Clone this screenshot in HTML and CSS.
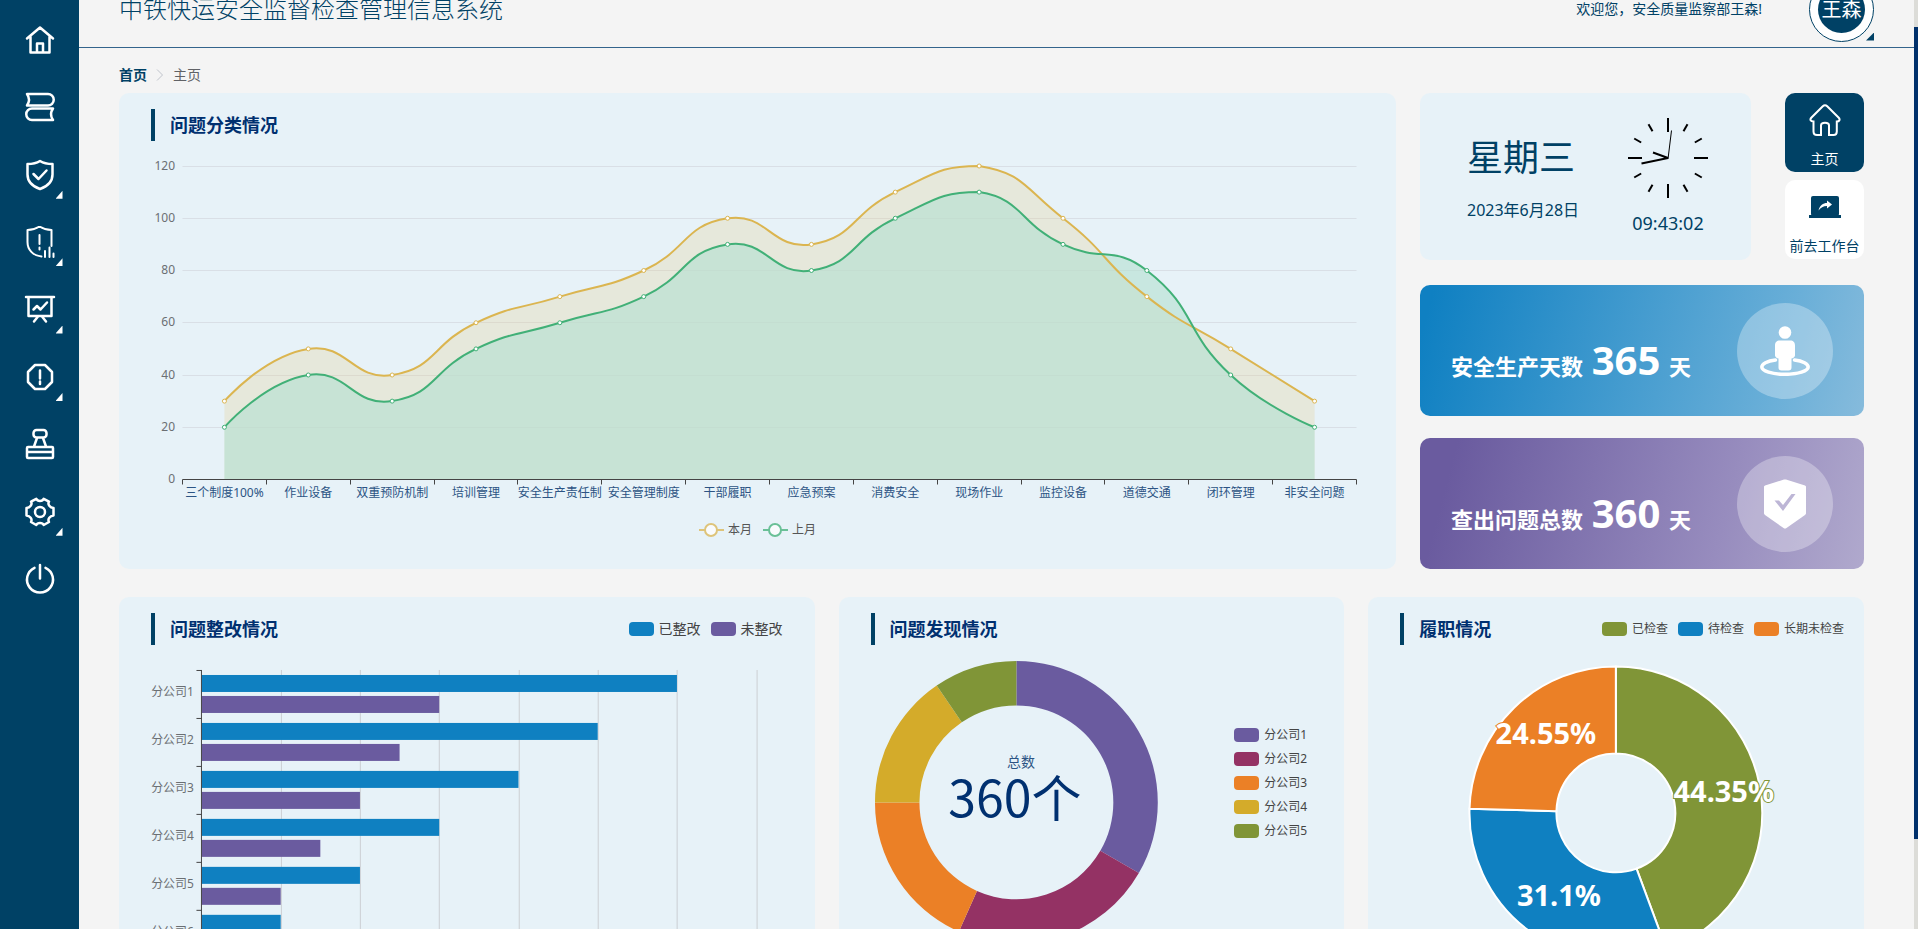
FILE: index.html
```html
<!DOCTYPE html>
<html lang="zh-CN">
<head>
<meta charset="utf-8">
<title>中铁快运安全监督检查管理信息系统</title>
<link rel="stylesheet" href="styles.css">
</head>
<body>
<div class="app">
  <aside class="sidebar">
    <nav class="side-nav">
      <a class="side-item" href="#" aria-label="home"><svg viewBox="0 0 32 32"><path d="M3 14.500 16 3.500 29 14.500M6.500 12.500V28.500H25.500V12.500M13 28V19.500H19V28"/></svg></a>
      <a class="side-item" href="#" aria-label="books"><svg viewBox="0 0 32 32"><path d="M3 3H24a5 5 0 0 1 0 11.500H3C5.800 10.500 5.800 7 3 3ZM29 17.500H8a5 5 0 0 0 0 11.500H29C26.200 25 26.200 21.500 29 17.500Z"/></svg></a>
      <a class="side-item has-sub" href="#" aria-label="shield"><svg viewBox="0 0 32 32"><path d="M16 2C12 4.500 8 5 3.500 5V15.500C3.500 22.500 9 27.500 16 30 23 27.500 28.500 22.500 28.500 15.500V5C24 5 20 4.500 16 2ZM9.500 15l5 5 8-8.500"/></svg></a>
      <a class="side-item has-sub" href="#" aria-label="risk"><svg class="thin" viewBox="0 0 32 32"><path d="M27.500 20V4C22.500 4 18.500 2.500 15.500 0.500 12.500 2.500 8.500 4 3.500 4V16C3.500 24 9 29.500 17.500 30.500M15.500 9V18M15.500 21.500V23.500M21 25V31M25.500 21.500V31M29.500 27.500V31"/></svg></a>
      <a class="side-item has-sub" href="#" aria-label="report"><svg viewBox="0 0 32 32"><path d="M2 3H30M4.500 3V22H27.500V3M9.500 15.500 13 12 16.500 15.500 23 8.500M14 22.500 10 27.500M18 22.500 22 27.500"/></svg></a>
      <a class="side-item has-sub" href="#" aria-label="warning"><svg viewBox="0 0 32 32"><path d="M11 4H21L28 11V21L21 28H11L4 21V11ZM16 9.500V17.500M16 20.500V23"/></svg></a>
      <a class="side-item" href="#" aria-label="stamp"><svg viewBox="0 0 32 32"><path d="M12.500 2H19.500A3 3 0 0 1 22.500 5V6.500A3 3 0 0 1 19.500 9.500H12.500A3 3 0 0 1 9.500 6.500V5A3 3 0 0 1 12.500 2ZM13 10 10 18.500M19 10 22 18.500M4 19H28A1 1 0 0 1 29 20V29A1 1 0 0 1 28 30H4A1 1 0 0 1 3 29V20A1 1 0 0 1 4 19ZM3 24H29"/></svg></a>
      <a class="side-item has-sub" href="#" aria-label="settings"><svg viewBox="0 0 32 32"><circle cx="16" cy="16" r="5"/><path d="M12.300 2.800C13.500 5.600 18.500 5.600 19.700 2.800L25 5.700C23.300 8.500 26 11.800 29.500 12V19.500C26 20 23.300 23 25 26L19.700 29C18.500 26.400 13.500 26.400 12.300 29L7 26C8.700 23 6 20 2.500 19.500V12C6 11.800 8.700 8.500 7 5.700Z"/></svg></a>
      <a class="side-item" href="#" aria-label="logout"><svg viewBox="0 0 32 32"><path d="M16 2V15.500M10.500 4.800A13 13 0 1 0 21.500 4.800"/></svg></a>
    </nav>
  </aside>

  <main class="main">
    <header class="topbar">
      <h1 class="system-name">中铁快运安全监督检查管理信息系统</h1>
      <span class="welcome">欢迎您，安全质量监察部王森!</span>
      <button class="avatar" type="button"><span class="avatar-name">王森</span></button>
    </header>

    <div class="content">
      <nav class="breadcrumb">
        <a class="crumb-home" href="#">首页</a>
        <svg class="crumb-arrow" viewBox="0 0 8 14"><path d="M1 1.500 6.500 7 1 12.500"/></svg>
        <span>主页</span>
      </nav>

      <section class="row row-top">
        <article class="panel">
          <div class="panel-head"><h2>问题分类情况</h2></div>
          <svg class="chart" id="line-chart" viewBox="0 0 1277 428"></svg>
        </article>

        <div class="side-column">
          <div class="top-cards">
            <div class="clock-card">
              <div class="date-block">
                <strong class="weekday">星期三</strong>
                <span class="date">2023年6月28日</span>
              </div>
              <div class="clock-block">
                <svg class="clock" viewBox="-40 -40 80 80">
                  <g id="clock-ticks"></g>
                  <path class="hand" d="M0 0-15-5.500M0 0-26.500 5.500"/>
                  <path class="hand second" d="M0 1 3.500-27.500"/>
                </svg>
                <time class="time">09:43:02</time>
              </div>
            </div>
            <div class="tiles">
              <button class="tile active" type="button">
                <svg viewBox="0 0 32 32"><path class="outline" d="M16 1.200C17 1.200 17.600 1.700 18.200 2.300L29.500 13.500C31.500 15.500 30.500 17.500 27.800 17.500V27.500C27.800 30 26.500 31 24.500 31H20V21.500C20 19.500 19 18.800 16 18.800S12 19.500 12 21.500V31H8C5.500 31 4.500 30 4.500 27.500V17.500C1.500 17.500 .5 15.500 2.500 13.500L13.800 2.300C14.400 1.700 15 1.200 16 1.200Z"/></svg>
                <span>主页</span>
              </button>
              <button class="tile" type="button">
                <svg viewBox="0 0 32 32"><rect class="solid" x="2" y="5" width="28" height="20" rx="2"/><path class="solid" d="M0 24H32V27H0Z"/><path class="cut" d="M9.500 19.500C11 14 14 12 18 12V9.500L23 13.500 18 17.500V15C14 15 12 16.500 9.500 19.500Z"/></svg>
                <span>前去工作台</span>
              </button>
            </div>
          </div>

          <div class="stat stat-blue">
            <p class="stat-text">安全生产天数 <b>365</b> 天</p>
            <span class="stat-icon"><svg viewBox="0 0 50 50"><circle cx="25" cy="6.500" r="6.300"/><path d="M20 14.500H30C33.500 14.500 35 16.500 35 19.500V29.500C35 31 33 32.500 31.500 32.500V41.500C31.500 43.500 30.500 44.500 28.500 44.500H21.500C19.500 44.500 18.500 43.500 18.500 41.500V32.500C17 32.500 15 31 15 29.500V19.500C15 16.500 16.500 14.500 20 14.500Z"/><path class="ring" d="M15.500 34C7 35 1.800 38 1.800 41 1.800 45 12 48.300 25 48.300S48.200 45 48.200 41C48.200 38 43 35 34.500 34"/></svg></span>
          </div>
          <div class="stat stat-purple">
            <p class="stat-text">查出问题总数 <b>360</b> 天</p>
            <span class="stat-icon"><svg viewBox="0 0 50 50"><path d="M24 .5H26L45 6.500C46 7 46 7.500 46 8V34C46 35 45.500 35.500 45 36L26.500 49C25.500 49.700 24.500 49.700 23.500 49L5 36C4.500 35.500 4 35 4 34V8C4 7.500 4 7 5 6.500Z"/><path class="check" d="M14.500 21.500H19L23 26 31.500 15H35.500L23 32Z"/></svg></span>
          </div>
        </div>
      </section>

      <section class="row row-bottom">
        <article class="panel">
          <div class="panel-head">
            <h2>问题整改情况</h2>
            <ul class="legend">
              <li><i class="swatch blue"></i>已整改</li>
              <li><i class="swatch purple"></i>未整改</li>
            </ul>
          </div>
          <svg class="chart" id="bar-chart" viewBox="0 0 696 370"></svg>
        </article>

        <article class="panel">
          <div class="panel-head"><h2>问题发现情况</h2></div>
          <div class="donut-body">
            <svg class="chart" id="donut-chart" viewBox="0 0 380 370"></svg>
            <ul class="legend legend-small legend-list">
              <li><i class="swatch purple"></i>分公司1</li>
              <li><i class="swatch wine"></i>分公司2</li>
              <li><i class="swatch orange"></i>分公司3</li>
              <li><i class="swatch yellow"></i>分公司4</li>
              <li><i class="swatch green"></i>分公司5</li>
            </ul>
          </div>
        </article>

        <article class="panel">
          <div class="panel-head head-wide">
            <h2>履职情况</h2>
            <ul class="legend legend-small">
              <li><i class="swatch green"></i>已检查</li>
              <li><i class="swatch blue"></i>待检查</li>
              <li><i class="swatch orange"></i>长期未检查</li>
            </ul>
          </div>
          <svg class="chart" id="pie-chart" viewBox="0 0 496 370"></svg>
        </article>
      </section>
    </div>
  </main>

  <div class="scroll-track"><div class="scroll-thumb"></div></div>
</div>
<script src="charts.js"></script>
</body>
</html>
```

FILE: styles.css
```css
:root {
  --navy: #004165;
  --ink: #003070;
  --panel: #e7f2f8;
  --blue: #0f80c1;
  --purple: #6a5b9f;
  --wine: #943264;
  --orange: #eb8026;
  --yellow: #d4ab2a;
  --green: #809537;
}

* {
  box-sizing: border-box;
}

body {
  margin: 0;
  background: #f4f4f4;
  color: var(--navy);
  font: 14px/20px "Noto Sans", "Noto Sans CJK SC", sans-serif;
}

h1, h2, p, ul {
  margin: 0;
  padding: 0;
}

button {
  border: 0;
  padding: 0;
  font: inherit;
  cursor: pointer;
}

a {
  color: inherit;
  text-decoration: none;
}

.app {
  display: grid;
  grid-template-columns: 79px minmax(0, 1fr) 4px;
  height: 100vh;
  overflow: hidden;
}

/* Sidebar */
.sidebar {
  background: var(--navy);
  padding-top: 24px;
}

.side-nav {
  display: flex;
  flex-direction: column;
  align-items: center;
  justify-content: space-between;
  height: 571px;
}

.side-item {
  position: relative;
  width: 32px;
  height: 32px;
}

.side-item svg {
  display: block;
  fill: none;
  stroke: #fff;
  stroke-width: 2.5;
  stroke-linejoin: round;
  stroke-linecap: round;
}

.side-item .thin {
  stroke-width: 2;
}

.has-sub::after,
.avatar::after {
  content: "";
  position: absolute;
  left: 32px;
  top: 32px;
  width: 7px;
  height: 8px;
  background: #fff;
  clip-path: polygon(100% 0, 100% 100%, 0 100%);
}

/* The page is shown slightly scrolled, so the top bar starts above the view. */
.main {
  overflow: hidden;
}

.topbar {
  display: flex;
  align-items: center;
  height: 77px;
  margin-top: -29px;
  padding: 0 40px;
  border-bottom: 1px solid #33648c;
}

.system-name {
  font-size: 24px;
  line-height: 32px;
  font-weight: 300;
}

.welcome {
  margin-left: auto;
}

.avatar {
  position: relative;
  display: grid;
  place-items: center;
  width: 65px;
  height: 65px;
  margin-left: 47px;
  border: 1px solid var(--navy);
  border-radius: 50%;
  background: #fff;
}

.avatar::after {
  left: 56px;
  top: 55px;
  width: 8px;
  background: var(--navy);
}

.avatar-name {
  width: 47px;
  height: 47px;
  border-radius: 50%;
  background: var(--navy);
  color: #fff;
  font-size: 20px;
  line-height: 47px;
  white-space: nowrap;
}

.content {
  padding: 17px 50px 24px 40px;
}

.breadcrumb {
  display: flex;
  align-items: center;
  gap: 9px;
  height: 20px;
  margin-bottom: 8px;
  color: #606266;
}

.crumb-home {
  color: var(--navy);
  font-weight: 700;
}

.crumb-arrow {
  width: 8px;
  height: 14px;
  fill: none;
  stroke: #c0c4cc;
}

/* Rows and panels */
.row {
  display: grid;
  gap: 24px;
}

.row-top {
  grid-template-columns: 1277fr 444fr;
  margin-bottom: 28px;
}

.row-bottom {
  grid-template-columns: 696fr 506fr 496fr;
}

.panel {
  min-width: 0;
  padding-top: 16px;
  border-radius: 10px;
  background: var(--panel);
}

.panel-head {
  display: flex;
  align-items: center;
  justify-content: space-between;
  height: 32px;
  margin: 0 32px;
}

.head-wide {
  margin-right: 20px;
}

.panel-head h2 {
  padding-left: 15px;
  border-left: 4px solid var(--navy);
  color: var(--ink);
  font-size: 18px;
  line-height: 32px;
  white-space: nowrap;
}

.chart {
  display: block;
  width: 100%;
}

.legend {
  display: flex;
  gap: 10px;
  color: #444;
  font-size: 14px;
  line-height: 14px;
  list-style: none;
}

.legend li {
  display: flex;
  align-items: center;
  gap: 5px;
  white-space: nowrap;
}

.legend-small {
  font-size: 12px;
}

.swatch {
  width: 25px;
  height: 14px;
  border-radius: 4px;
}

.swatch.blue { background: var(--blue); }
.swatch.purple { background: var(--purple); }
.swatch.wine { background: var(--wine); }
.swatch.orange { background: var(--orange); }
.swatch.yellow { background: var(--yellow); }
.swatch.green { background: var(--green); }

.donut-body {
  display: grid;
  grid-template-columns: 380fr 126fr;
}

.legend-list {
  flex-direction: column;
  padding: 83px 0 0 16px;
}

/* Right column */
.side-column {
  display: flex;
  flex-direction: column;
  gap: 22px;
}

.top-cards {
  display: flex;
  gap: 34px;
  margin-bottom: 3px;
}

.clock-card {
  flex: 1;
  display: flex;
  justify-content: space-between;
  padding: 25px 43px 0 47px;
  height: 167px;
  border-radius: 10px;
  background: var(--panel);
}

.date-block,
.clock-block {
  display: flex;
  flex-direction: column;
}

.date-block {
  padding-top: 16px;
  gap: 18px;
}

.weekday {
  font-size: 36px;
  line-height: 48px;
  font-weight: 400;
}

.date {
  font-size: 16px;
  white-space: nowrap;
}

.clock-block {
  align-items: center;
  gap: 15px;
}

.clock {
  width: 80px;
  height: 80px;
}

.clock line {
  stroke: #000;
  stroke-width: 2;
}

.hand {
  fill: none;
  stroke: #000;
  stroke-width: 2;
}

.second {
  stroke-width: 1;
}

.time {
  font-size: 18px;
}

.tiles {
  display: flex;
  flex-direction: column;
  gap: 8px;
  width: 79px;
}

.tile {
  display: flex;
  flex-direction: column;
  align-items: center;
  gap: 13px;
  height: 79px;
  padding-top: 11px;
  border-radius: 10px;
  background: #fff;
  color: var(--navy);
  white-space: nowrap;
}

.tile.active {
  background: var(--navy);
  color: #fff;
}

.tile svg {
  flex: none;
  width: 32px;
  height: 32px;
}

.outline {
  fill: none;
  stroke: currentColor;
  stroke-width: 2;
}

.solid {
  fill: currentColor;
}

.cut {
  fill: #fff;
}

.stat {
  display: flex;
  align-items: center;
  justify-content: space-between;
  height: 131px;
  padding: 0 31px;
  border-radius: 10px;
  color: #fff;
}

.stat-blue {
  background: linear-gradient(105deg, #0f80c2 3%, #6aafd8 80%, #86bbdc);
}

.stat-purple {
  background: linear-gradient(105deg, #6a5b9f 8%, #978cbe 68%, #b0a9cd);
}

.stat-text {
  padding-top: 25px;
  font-size: 22px;
  line-height: 48px;
  font-weight: 700;
  white-space: nowrap;
}

.stat-text b {
  margin: 0 3px;
  font-size: 40px;
  font-weight: 700;
}

.stat-icon {
  display: grid;
  place-items: center;
  width: 96px;
  height: 96px;
  border-radius: 50%;
  background: rgba(255, 255, 255, .3);
}

.stat-icon svg {
  width: 50px;
  height: 50px;
  fill: #fff;
}

.stat-icon .ring {
  fill: none;
  stroke: #fff;
  stroke-width: 3.5;
  stroke-linecap: round;
}

.stat-icon .check {
  fill: #bdb6d6;
}

/* Charts */
.axis-label { font-size: 12px; fill: #6b6f73; }
.category-label { font-size: 12px; fill: #2c5484; text-anchor: middle; }
.end { text-anchor: end; }
.grid-line { stroke: #d9dfe6; }
.bar-grid { stroke: #cccfd3; }
.axis { stroke: #444; fill: none; }
.legend-text { font-size: 12px; fill: #555; }
.line-a, .line-b { fill: none; stroke-width: 2; }
.line-a { stroke: #dbb550; }
.line-b { stroke: #41b077; }
.area-a { fill: rgba(227, 209, 151, .3); }
.area-b { fill: rgba(183, 224, 211, .65); }
.dot.line-a, .dot.line-b { fill: #fff; stroke-width: 1; }
.legend-key { opacity: .75; }
.legend-dot.line-a, .legend-dot.line-b { fill: #fff; }
.donut-caption { font-size: 14px; fill: #2c5484; text-anchor: middle; }
.donut-total { font: 50px "Noto Sans CJK SC", sans-serif; fill: var(--ink); text-anchor: middle; }
.pie-label {
  font-size: 29px;
  font-weight: 700;
  fill: #fff;
  stroke-width: 2;
  paint-order: stroke;
  text-anchor: middle;
}
.pie-slice { stroke: #fff; stroke-width: 2; }

/* Page scroll position */
.scroll-track {
  padding-top: 27px;
  background: #dcdcd8;
}

.scroll-thumb {
  height: 90%;
  background: #00306b;
}
```

FILE: charts.js
```js
const NS = "http://www.w3.org/2000/svg";

function add(parent, tag, attrs, text) {
  const el = document.createElementNS(NS, tag);
  for (const key in attrs) el.setAttribute(key, attrs[key]);
  if (text !== undefined) el.textContent = text;
  parent.appendChild(el);
  return el;
}

/* Smooth path through the points; control points stay inside the series' own height range. */
function smoothPath(points) {
  const ys = points.map(p => p[1]);
  const top = Math.min(...ys), bottom = Math.max(...ys);
  const clamp = y => Math.max(top, Math.min(bottom, y));
  let d = "M" + points[0].join(" ");
  let out = points[0];
  for (let i = 1; i < points.length; i++) {
    const p = points[i], prev = points[i - 1], next = points[i + 1];
    let into = p, nextOut = p;
    if (next) {
      const vx = (next[0] - prev[0]) / 2, vy = (next[1] - prev[1]) / 2;
      const before = Math.hypot(p[0] - prev[0], p[1] - prev[1]);
      const after = Math.hypot(next[0] - p[0], next[1] - p[1]);
      const ratio = after / (after + before);
      into = [p[0] - vx * (1 - ratio), clamp(p[1] - vy * (1 - ratio))];
      nextOut = [p[0] + vx * ratio, clamp(p[1] + vy * ratio)];
    }
    d += "C" + [...out, ...into, ...p].map(n => n.toFixed(1)).join(" ");
    out = nextOut;
  }
  return d;
}

function drawLineChart() {
  const svg = document.getElementById("line-chart");
  const names = ["三个制度100%", "作业设备", "双重预防机制", "培训管理", "安全生产责任制", "安全管理制度", "干部履职", "应急预案", "消费安全", "现场作业", "监控设备", "道德交通", "闭环管理", "非安全问题"];
  const series = [
    ["a", "本月", [30, 50, 40, 60, 70, 80, 100, 90, 110, 120, 100, 70, 50, 30]],
    ["b", "上月", [20, 40, 30, 50, 60, 70, 90, 80, 100, 110, 90, 80, 40, 20]]
  ];
  const left = 63.5, right = 1237.5, base = 338.5, unit = 313.5 / 120;
  const step = (right - left) / names.length;

  for (let v = 0; v <= 120; v += 20) {
    const y = Math.floor(base - v * unit) + 0.5;
    if (v) add(svg, "line", { class: "grid-line", x1: left, x2: right, y1: y, y2: y });
    add(svg, "text", { class: "axis-label end", x: 56, y: y + 3 }, v);
  }
  for (const [key, , values] of series) {
    const pts = values.map((v, i) => [left + step * (i + 0.5), base - v * unit]);
    const path = smoothPath(pts);
    add(svg, "path", { class: "area-" + key, d: path + "V" + base + "H" + pts[0][0] + "Z" });
  }
  add(svg, "line", { class: "axis", x1: left, x2: right, y1: base, y2: base });
  for (let i = 0; i <= names.length; i++) {
    const x = Math.floor(left + step * i) + 0.5;
    add(svg, "line", { class: "axis", x1: x, x2: x, y1: base, y2: base + 5 });
    if (i < names.length) {
      add(svg, "text", { class: "category-label", x: left + step * (i + 0.5), y: 356 }, names[i]);
    }
  }
  for (const [key, , values] of series) {
    const pts = values.map((v, i) => [left + step * (i + 0.5), base - v * unit]);
    add(svg, "path", { class: "line-" + key, d: smoothPath(pts) });
    for (const p of pts) add(svg, "circle", { class: "dot line-" + key, cx: p[0], cy: p[1], r: 2 });
  }
  series.forEach(([key, label], i) => {
    const x = 592 + i * 64;
    const mark = add(svg, "g", { class: "legend-key" });
    add(mark, "line", { class: "line-" + key, x1: x - 12, x2: x + 13, y1: 389, y2: 389 });
    add(mark, "circle", { class: "legend-dot line-" + key, cx: x, cy: 389, r: 6 });
    add(svg, "text", { class: "legend-text", x: x + 17, y: 393 }, label);
  });
}

function drawBarChart() {
  const svg = document.getElementById("bar-chart");
  const done = [6, 5, 4, 3, 2, 1], open = [3, 2.5, 2, 1.5, 1, 0.5];
  const left = 82.5, top = 25, unit = 79.3, band = 47.9;
  for (let i = 1; i <= 7; i++) {
    const x = Math.round(left + unit * i) + 0.5;
    add(svg, "line", { class: "bar-grid", x1: x, x2: x, y1: top, y2: top + band * 6 });
  }
  done.forEach((value, i) => {
    const y = Math.round(top + band * i);
    add(svg, "rect", { x: left, y: y + 5, width: value * unit, height: 17, fill: "var(--blue)" });
    add(svg, "rect", { x: left, y: y + 26, width: open[i] * unit, height: 17, fill: "var(--purple)" });
    add(svg, "line", { class: "axis", x1: left - 5, x2: left, y1: y + 0.5, y2: y + 0.5 });
    add(svg, "text", { class: "axis-label end", x: 75, y: y + 26 }, "分公司" + (i + 1));
  });
  add(svg, "line", { class: "axis", x1: left, x2: left, y1: top, y2: top + band * 6 });
}

function ringSlice(cx, cy, inner, outer, from, to) {
  const at = (r, deg) => {
    const a = (deg - 90) * Math.PI / 180;
    return (cx + r * Math.cos(a)).toFixed(2) + " " + (cy + r * Math.sin(a)).toFixed(2);
  };
  const large = to - from > 180 ? 1 : 0;
  return `M${at(outer, from)}A${outer} ${outer} 0 ${large} 1 ${at(outer, to)}L${at(inner, to)}A${inner} ${inner} 0 ${large} 0 ${at(inner, from)}Z`;
}

function drawDonut() {
  const svg = document.getElementById("donut-chart");
  const colors = ["purple", "wine", "orange", "yellow", "green"];
  const stops = [0, 120, 204, 270, 325.7, 360];
  colors.forEach((color, i) => {
    add(svg, "path", { d: ringSlice(177.5, 157.5, 97, 141.5, stops[i], stops[i + 1]), fill: `var(--${color})` });
  });
  add(svg, "text", { class: "donut-caption", x: 182, y: 122 }, "总数");
  add(svg, "text", { class: "donut-total", x: 176, y: 172 }, "360个");
}

function drawPie() {
  const svg = document.getElementById("pie-chart");
  const slices = [
    ["green", 44.35, 356, 157],
    ["blue", 31.1, 191, 261],
    ["orange", 24.55, 178, 99]
  ];
  let from = 0;
  for (const [color, share] of slices) {
    const to = from + share * 3.6;
    add(svg, "path", { class: "pie-slice", d: ringSlice(248, 168, 59.5, 146.5, from, to), fill: `var(--${color})` });
    from = to;
  }
  for (const [color, share, x, y] of slices) {
    add(svg, "text", { class: "pie-label", x, y, stroke: `var(--${color})` }, share + "%");
  }
}

function drawClock() {
  const ticks = document.getElementById("clock-ticks");
  for (let i = 0; i < 12; i++) {
    const major = i % 3 === 0;
    add(ticks, "line", { y1: major ? -40 : -39, y2: major ? -26 : -31, transform: `rotate(${i * 30})` });
  }
}

drawLineChart();
drawBarChart();
drawDonut();
drawPie();
drawClock();
```
